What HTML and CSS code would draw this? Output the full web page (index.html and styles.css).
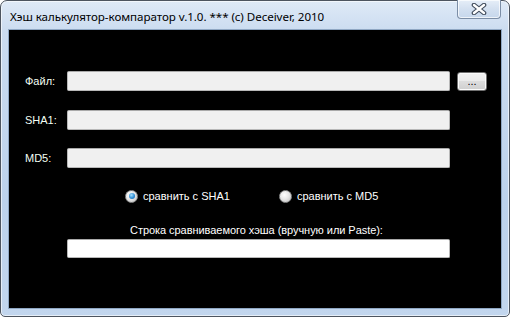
FILE: index.html
```html
<!DOCTYPE html>
<html>
<head>
<meta charset="utf-8">
<link rel="stylesheet" href="styles.css">
</head>
<body>
<div class="window">
  <div class="titlebar">
    <span class="title">Хэш калькулятор-компаратор v.1.0. *** (c) Deceiver, 2010</span>
    <div class="close">
      <svg width="16" height="12" viewBox="0 0 16 12">
        <path d="M3 2 L13 10 M13 2 L3 10" stroke="#3f4a5a" stroke-width="4.6" stroke-linecap="round"/>
        <path d="M3 2 L13 10 M13 2 L3 10" stroke="#ffffff" stroke-width="2.4" stroke-linecap="round"/>
      </svg>
    </div>
  </div>
  <div class="client">
    <div class="row r1">
      <label class="lbl">Файл:</label>
      <div class="field"></div>
      <button class="btn">...</button>
    </div>
    <div class="row r2">
      <label class="lbl">SHA1:</label>
      <div class="field"></div>
    </div>
    <div class="row r3">
      <label class="lbl">MD5:</label>
      <div class="field"></div>
    </div>
    <div class="radios">
      <div class="radio"><span class="dot on"></span><span>сравнить с SHA1</span></div>
      <div class="radio second"><span class="dot"></span><span>сравнить с MD5</span></div>
    </div>
    <div class="hashlbl">Строка сравниваемого хэша (вручную или Paste):</div>
    <div class="row r4">
      <span class="lbl"></span>
      <div class="field white"></div>
    </div>
  </div>
</div>
</body>
</html>
```
FILE: styles.css
```css
html, body {
  margin: 0;
  padding: 0;
  background: #ffffff;
}
.window {
  width: 510px;
  height: 317px;
  box-sizing: border-box;
  border: 1px solid #4d5560;
  border-radius: 7px 7px 5px 5px;
  background: linear-gradient(to bottom, #dfeaf7 0px, #cbdcf0 30px, #bcd2ec 200px, #c2d6ee 317px);
  box-shadow: inset 0 0 0 1px rgba(255,255,255,0.6);
  display: flex;
  flex-direction: column;
  padding: 0 7px 7px 7px;
  font-family: "Liberation Sans", Arial, sans-serif;
}
.titlebar {
  height: 28px;
  position: relative;
  display: flex;
  align-items: center;
}
.title {
  font-family: "Noto Sans", "Open Sans", sans-serif;
  font-size: 11.6px;
  color: #000;
  padding-left: 2px;
  margin-top: 2px;
  letter-spacing: -0.05px;
}
.close {
  position: absolute;
  right: 1px;
  top: -1px;
  width: 44px;
  height: 19px;
  box-sizing: border-box;
  border: 1px solid #7c8ea6;
  border-top: none;
  border-radius: 0 0 4px 4px;
  background: linear-gradient(to bottom, #e6eef8, #d3e0f0 50%, #c6d7ec);
  box-shadow: inset 0 0 0 1px rgba(255,255,255,0.7);
  display: flex;
  align-items: center;
  justify-content: center;
}
.client {
  flex: 1;
  background: #000;
  border: 1px solid #8fa7c3;
  display: flex;
  flex-direction: column;
  padding-top: 41px;
  color: #fff;
  font-size: 11px;
}
.row {
  display: flex;
  align-items: center;
  height: 20px;
}
.r2 { margin-top: 19px; }
.r3 { margin-top: 18px; }
.lbl {
  width: 58px;
  padding-left: 16px;
  box-sizing: border-box;
  color: #f4fff4;
  font-size: 11px;
}
.field {
  width: 383px;
  height: 20px;
  box-sizing: border-box;
  background: #f0f0f0;
  border: 1px solid #b8b8b8;
  border-top-color: #a9a9a9;
  border-radius: 2px;
}
.field.white {
  background: #ffffff;
  height: 19px;
}
.btn {
  margin-left: 7px;
  width: 30px;
  height: 19px;
  box-sizing: border-box;
  border: 1px solid #707070;
  border-radius: 3px;
  background: linear-gradient(to bottom, #f2f2f2 0%, #ebebeb 45%, #dddddd 50%, #cfcfcf 100%);
  box-shadow: inset 0 0 0 1px #fbfbfb;
  font-family: "Liberation Sans", Arial, sans-serif;
  font-size: 11px;
  color: #000;
  padding: 0 0 3px 0;
  line-height: 12px;
  display: flex;
  align-items: flex-end;
  justify-content: center;
}
.radios {
  margin-top: 20px;
  height: 16px;
  display: flex;
  align-items: center;
  padding-left: 116px;
}
.radio {
  display: flex;
  align-items: center;
  gap: 5px;
}
.radio.second {
  margin-left: 49px;
}
.dot {
  width: 13px;
  height: 13px;
  box-sizing: border-box;
  border-radius: 50%;
  border: 1px solid #8e8f8f;
  background: radial-gradient(circle at 40% 35%, #ffffff 0%, #e8e8e8 45%, #b8b8b8 100%);
  position: relative;
}
.dot.on::after {
  content: "";
  position: absolute;
  left: 2.5px;
  top: 2.5px;
  width: 6px;
  height: 6px;
  border-radius: 50%;
  background: radial-gradient(circle at 40% 35%, #a8e0ff 0%, #2f8fd6 55%, #1a5c9a 100%);
}
.hashlbl {
  margin-top: 19px;
  height: 14px;
  line-height: 14px;
  padding-left: 121px;
  letter-spacing: -0.05px;
}
.r4 {
  margin-top: 2px;
  height: 19px;
}
```
